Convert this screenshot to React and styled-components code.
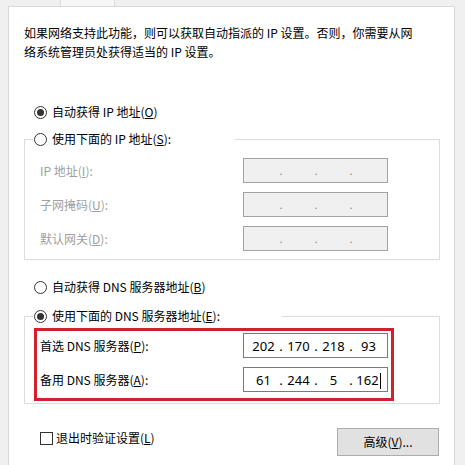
import React from "react";
import styled, { createGlobalStyle } from "styled-components";

const Global = createGlobalStyle`
  html, body { margin: 0; padding: 0; background: #f0f0f0; }
  body {
    font-family: "Noto Sans CJK SC", "Microsoft YaHei", sans-serif;
    font-size: 12px;
    color: #000;
  }
  * { box-sizing: border-box; }
`;

const Screen = styled.div`
  width: 465px;
  height: 465px;
  overflow: hidden;
  background: #f0f0f0;
`;

const TabStrip = styled.div`
  height: 6px;
  display: flex;
  padding-left: 60px;
`;

const Tab = styled.div`
  width: 55px;
  background: #f7f7f7;
  border-left: 1px solid #dadada;
  border-right: 1px solid #dadada;
`;

const Panel = styled.div`
  margin-left: 8px;
  width: 447px;
  height: 459px;
  border: 1px solid #d9d9d9;
  border-bottom: none;
  background: #fff;
  padding: 16px 14px 0 15px;
`;

const Intro = styled.p`
  margin: 0;
  line-height: 19px;
`;

const RadioRow = styled.label`
  display: flex;
  align-items: center;
  gap: 5px;
  height: 20px;
  line-height: 20px;
  margin-left: ${(p) => p.$indent ?? 10}px;
  margin-top: ${(p) => p.$top ?? 0}px;
  white-space: nowrap;
`;

const RadioDot = styled.span`
  width: 13px;
  height: 13px;
  border-radius: 50%;
  border: 1px solid #333;
  background: #fff;
  display: flex;
  align-items: center;
  justify-content: center;
  flex: none;
  &::after {
    content: "";
    width: 7px;
    height: 7px;
    border-radius: 50%;
    background: #333;
    display: ${(p) => (p.$checked ? "block" : "none")};
  }
`;

const Group = styled.fieldset`
  margin: ${(p) => p.$top ?? 0}px 0 0 0;
  border: 1px solid #dcdcdc;
  padding: ${(p) => p.$padTop}px 0 ${(p) => p.$padBottom}px 9px;
  min-width: 0;
  width: 416px;
`;

const Legend = styled.legend`
  padding: 0;
  margin-left: -1px;
  width: ${(p) => p.$w}px;
  height: 20px;
`;

const Rows = styled.div`
  display: flex;
  flex-direction: column;
  gap: 9px;
  padding-left: 6px;
`;

const Highlight = styled.div`
  width: 360px;
  border: 3px solid #d0222c;
  padding: 2px 3px 6px 3px;
  display: flex;
  flex-direction: column;
  gap: 9px;
`;

const FieldRow = styled.div`
  display: flex;
  align-items: center;
  height: 25px;
`;

const FieldLabel = styled.span`
  width: 203px;
  flex: none;
  color: ${(p) => (p.$disabled ? "#a0a0a0" : "#000")};
  white-space: nowrap;
  line-height: 20px;
`;

const IpBox = styled.div`
  width: 145px;
  height: 25px;
  flex: none;
  display: flex;
  align-items: center;
  padding-left: 4px;
  border: 1px solid ${(p) => (p.$disabled ? "#a3a3a3" : "#7a7a7a")};
  background: ${(p) => (p.$disabled ? "#f0f0f0" : "#fff")};
  font-family: "Noto Sans", "Liberation Sans", sans-serif;
  font-size: 13px;
  line-height: 20px;
`;

const Octet = styled.span`
  width: 31px;
  text-align: center;
  white-space: nowrap;
`;

const Sep = styled.span`
  width: 4px;
  text-align: center;
  color: ${(p) => (p.$disabled ? "#7a7a7a" : "#000")};
  font-size: ${(p) => (p.$disabled ? "10px" : "13px")};
`;

const Caret = styled.span`
  display: inline-block;
  width: 1px;
  height: 16px;
  background: #000;
  vertical-align: middle;
  margin-left: 1px;
`;

const BottomRow = styled.div`
  display: flex;
  justify-content: space-between;
  align-items: flex-start;
  margin-top: 24px;
  padding-left: 16px;
  padding-right: 1px;
`;

const CheckRow = styled.label`
  display: flex;
  align-items: center;
  gap: 3px;
  height: 20px;
  line-height: 20px;
`;

const CheckBox = styled.span`
  width: 13px;
  height: 13px;
  border: 1px solid #333;
  background: #fff;
  flex: none;
`;

const Button = styled.button`
  width: 102px;
  height: 28px;
  background: #e1e1e1;
  border: 1px solid #adadad;
  font-family: inherit;
  font-size: 12px;
  color: #000;
  padding: 0;
  line-height: 20px;
`;

function IpField({ values, disabled, caret }) {
  const parts = values || ["", "", "", ""];
  const out = [];
  parts.forEach((v, i) => {
    out.push(
      <Octet key={"o" + i}>
        {v}
        {caret && i === 3 ? <Caret /> : null}
      </Octet>
    );
    if (i < 3)
      out.push(
        <Sep key={"s" + i} $disabled={disabled}>
          .
        </Sep>
      );
  });
  return <IpBox $disabled={disabled}>{out}</IpBox>;
}

function Radio({ checked, children, ...rest }) {
  return (
    <RadioRow {...rest}>
      <RadioDot $checked={checked} />
      <span>{children}</span>
    </RadioRow>
  );
}

export default function App() {
  return (
    <Screen>
      <Global />
      <TabStrip>
        <Tab />
      </TabStrip>
      <Panel>
        <Intro>
          如果网络支持此功能，则可以获取自动指派的 IP 设置。否则，你需要从网
          <br />
          络系统管理员处获得适当的 IP 设置。
        </Intro>

        <Radio checked $top={41}>
          自动获得 IP 地址(<u>O</u>)
        </Radio>

        <Group $top={7} $padTop={9} $padBottom={8}>
          <Legend $w={202}>
            <Radio $indent={1}>
              使用下面的 IP 地址(<u>S</u>):
            </Radio>
          </Legend>
          <Rows>
            <FieldRow>
              <FieldLabel $disabled>
                IP 地址(<u>I</u>):
              </FieldLabel>
              <IpField disabled />
            </FieldRow>
            <FieldRow>
              <FieldLabel $disabled>
                子网掩码(<u>U</u>):
              </FieldLabel>
              <IpField disabled />
            </FieldRow>
            <FieldRow>
              <FieldLabel $disabled>
                默认网关(<u>D</u>):
              </FieldLabel>
              <IpField disabled />
            </FieldRow>
          </Rows>
        </Group>

        <Radio $top={17}>
          自动获得 DNS 服务器地址(<u>B</u>)
        </Radio>

        <Group $top={9} $padTop={2} $padBottom={2}>
          <Legend $w={249}>
            <Radio checked $indent={1}>
              使用下面的 DNS 服务器地址(<u>E</u>):
            </Radio>
          </Legend>
          <Highlight>
            <FieldRow>
              <FieldLabel>
                首选 DNS 服务器(<u>P</u>):
              </FieldLabel>
              <IpField values={["202", "170", "218", "93"]} />
            </FieldRow>
            <FieldRow>
              <FieldLabel>
                备用 DNS 服务器(<u>A</u>):
              </FieldLabel>
              <IpField values={["61", "244", "5", "162"]} caret />
            </FieldRow>
          </Highlight>
        </Group>

        <BottomRow>
          <CheckRow>
            <CheckBox />
            <span>
              退出时验证设置(<u>L</u>)
            </span>
          </CheckRow>
          <Button>
            高级(<u>V</u>)...
          </Button>
        </BottomRow>
      </Panel>
    </Screen>
  );
}
